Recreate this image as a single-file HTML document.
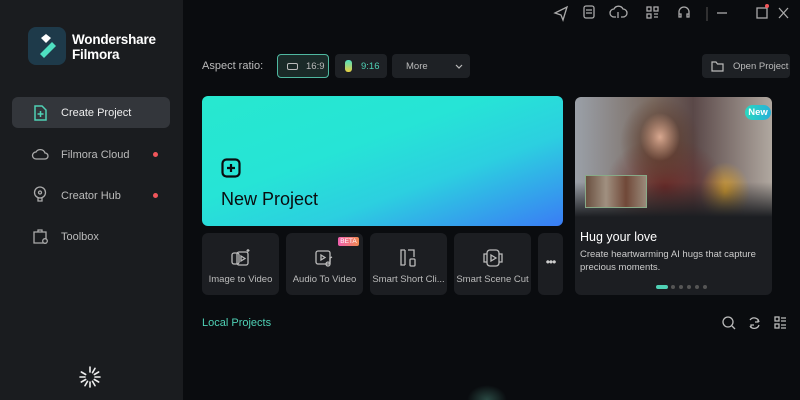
<!DOCTYPE html>
<html style="overflow:hidden;width:800px;height:400px"><head><meta charset="utf-8"><style>
*{margin:0;padding:0;box-sizing:border-box}
body{width:800px;height:400px;overflow:hidden;background:#0a0c0f;font-family:"Liberation Sans",sans-serif;position:relative;color:#ddd}
.a{position:absolute;white-space:nowrap}
.side{left:0;top:0;width:183px;height:400px;background:#1a1c1f}
.nav{left:12px;width:158px;height:31px;border-radius:6px;font-size:11px;color:#bbb;display:flex;align-items:center;padding-left:49px}
.dot{width:5px;height:5px;border-radius:50%;background:#f0555a}
.btn{top:54px;height:24px;border-radius:4px;background:#1e2125;font-size:9.5px;color:#bbb;display:flex;align-items:center}
.tool{top:233px;height:62px;width:77px;background:#1c1e22;border-radius:6px;font-size:9.5px;color:#bbb;text-align:center}
.tool svg{position:absolute;left:29px;top:16px}
.tool span{position:absolute;left:0;right:0;top:41px;white-space:nowrap;overflow:hidden}
svg{overflow:visible}
</style></head><body>
<div class="a side"></div>
<div class="a" style="left:28px;top:27px;width:38px;height:38px;border-radius:8px;background:#1e3a4a"></div>
<svg class="a" style="left:28px;top:27px" width="38" height="38"><path d="M13 11l5-4 5 4-5 5z" fill="#fff"/><path d="M12 27l12-12 4 4-12 12z" fill="#4fe0c2"/></svg>
<div class="a" style="left:72px;top:32px;font-size:13.5px;font-weight:bold;color:#fff;line-height:15px;letter-spacing:-0.2px">Wondershare<br>Filmora</div>
<div class="a nav" style="top:97px;background:#33363b;color:#eee">Create Project</div>
<svg class="a" style="left:33px;top:105px" width="14" height="16" fill="none" stroke="#4fd1b5" stroke-width="1.5"><path d="M2 1h7l4 4v10H2z"/><path d="M7.5 6v6M4.5 9h6"/></svg>
<div class="a nav" style="top:139px">Filmora Cloud</div><div class="a dot" style="left:153px;top:152px"></div>
<svg class="a" style="left:32px;top:147px" width="16" height="14" fill="none" stroke="#aaa" stroke-width="1.3"><path d="M4 12h9a3 3 0 0 0 0-6 5 5 0 0 0-9-1 3.5 3.5 0 0 0 0 7z"/></svg>
<div class="a nav" style="top:180px">Creator Hub</div><div class="a dot" style="left:153px;top:193px"></div>
<svg class="a" style="left:33px;top:186px" width="14" height="17" fill="none" stroke="#aaa" stroke-width="1.3"><circle cx="7" cy="6.5" r="5.5"/><path d="M5 12v3h4v-3"/><circle cx="7" cy="6.5" r="1.5"/></svg>
<div class="a nav" style="top:221px">Toolbox</div>
<svg class="a" style="left:33px;top:228px" width="15" height="16" fill="none" stroke="#aaa" stroke-width="1.3"><path d="M5 4V2h4v2M1 4h12v11H1z"/><circle cx="12" cy="13" r="2.3" fill="#1a1c1f"/></svg>
<svg class="a" style="left:78px;top:365px" width="24" height="24" stroke="#eee" stroke-width="1.6" stroke-linecap="round"><g transform="translate(12 12)"><path d="M0-5v-5"/><path d="M0-5v-5" transform="rotate(30)"/><path d="M0-5v-5" transform="rotate(60)"/><path d="M0-5v-5" transform="rotate(90)"/><path d="M0-5v-5" transform="rotate(120)"/><path d="M0-5v-5" transform="rotate(150)"/><path d="M0-5v-5" transform="rotate(180)"/><path d="M0-5v-5" transform="rotate(210)"/><path d="M0-5v-5" transform="rotate(240)"/><path d="M0-5v-5" transform="rotate(270)"/><path d="M0-5v-5" transform="rotate(300)"/></g></svg>
<svg class="a" style="left:552px;top:4px" width="245" height="18" fill="none" stroke="#aaa" stroke-width="1.3"><path d="M3 9l12-6-4 13-2-5z"/><rect x="32" y="2" width="10" height="12" rx="2"/><path d="M34 6h6M34 9h6"/><path d="M64 13h-2a4 4 0 0 1 0-8 5 5 0 0 1 9 0 4 4 0 0 1 0 8h-2M66 8v6"/><rect x="95" y="3" width="4" height="4"/><rect x="102" y="3" width="4" height="4"/><rect x="95" y="10" width="4" height="4"/><path d="M102 10h4M102 13h4"/><path d="M127 11V8a5 5 0 0 1 10 0v3M127 10h2v3h-2zM137 10h-2v3h2z"/><path d="M155 3v14" stroke="#444"/><path d="M165 9h10"/><rect x="205" y="4" width="10" height="10"/><path d="M227 4l9 10M236 4l-9 10"/></svg>
<div class="a dot" style="left:765px;top:4px;width:4px;height:4px"></div>
<div class="a" style="left:202px;top:60px;font-size:11px;color:#bbb">Aspect ratio:</div>
<div class="a btn" style="left:277px;width:52px;border:1px solid #4fb8a0;background:#1a2a28;padding-left:9px"><span style="display:inline-block;width:11px;height:7px;border:1.3px solid #bbb;border-radius:2px;margin-right:8px"></span>16:9</div>
<div class="a btn" style="left:335px;width:52px;padding-left:10px"><span style="display:inline-block;width:7px;height:12px;border-radius:3px;background:linear-gradient(#4fe0c2,#e8d040);margin-right:9px"></span><span style="color:#4fd1b5">9:16</span></div>
<div class="a btn" style="left:392px;width:78px;padding-left:14px">More<svg style="margin-left:27px" width="8" height="5" fill="none" stroke="#bbb" stroke-width="1.2"><path d="M1 1l3 3 3-3"/></svg></div>
<div class="a btn" style="left:702px;width:88px;padding-left:9px"><svg width="13" height="11" fill="none" stroke="#bbb" stroke-width="1.2" style="margin-right:9px"><path d="M1 1h4l1.5 2H12v7H1z"/></svg>Open Project</div>
<div class="a" style="left:202px;top:96px;width:361px;height:130px;border-radius:6px;background:linear-gradient(160deg,#27e8cf 0%,#26e4d6 40%,#2ccfe0 65%,#3a7cf5 100%)"></div>
<svg class="a" style="left:221px;top:158px" width="20" height="20" fill="none" stroke="#0a0c0f" stroke-width="2.2"><rect x="1.5" y="1.5" width="17" height="17" rx="4"/><path d="M10 6v8M6 10h8"/></svg>
<div class="a" style="left:221px;top:189px;font-size:18px;color:#0a0c0f">New Project</div>
<div class="a tool" style="left:202px"><svg width="20" height="18" fill="none" stroke="#bbb" stroke-width="1.3"><rect x="1" y="4" width="7" height="11" rx="2"/><rect x="6" y="3" width="11" height="13" rx="2"/><path d="M10 7l4 2.5-4 2.5z"/><path d="M17 0v3M15.5 1.5h3"/></svg><span>Image to Video</span></div>
<div class="a tool" style="left:286px"><svg width="20" height="18" fill="none" stroke="#bbb" stroke-width="1.3"><rect x="1" y="2" width="14" height="13" rx="2"/><path d="M6 6l4 2.5-4 2.5z"/><circle cx="13" cy="15" r="2"/><path d="M15 15V9l2-1"/></svg><span>Audio To Video</span></div>
<div class="a" style="left:338px;top:237px;width:21px;height:9px;border-radius:2px;background:linear-gradient(90deg,#f060b0,#f08a50);font-size:6.5px;color:#fff;text-align:center;line-height:9px">BETA</div>
<div class="a tool" style="left:370px"><svg width="20" height="18" fill="none" stroke="#bbb" stroke-width="1.3"><path d="M6 1H2v15h4M9 1h6v7"/><path d="M6 1v15"/><rect x="11" y="10" width="5" height="7" rx="1"/></svg><span>Smart Short Cli...</span></div>
<div class="a tool" style="left:454px"><svg width="20" height="18" fill="none" stroke="#bbb" stroke-width="1.3"><rect x="4" y="1" width="12" height="16" rx="3"/><path d="M4 5H1v8h3M16 5h3v8h-3"/><path d="M8 6l5 3-5 3z"/></svg><span>Smart Scene Cut</span></div>
<div class="a tool" style="left:538px;width:25px"><span style="top:22px;font-size:12px;letter-spacing:-1px;color:#ccc">•••</span></div>
<div class="a" style="left:575px;top:97px;width:197px;height:198px;border-radius:6px;background:#1c1e22;overflow:hidden">
<div class="a" style="left:0;top:0;width:197px;height:120px;background:radial-gradient(ellipse 20px 24px at 85px 40px,#d8a890,transparent),radial-gradient(ellipse 40px 45px at 85px 45px,#5a3828,transparent),radial-gradient(ellipse 60px 50px at 90px 90px,#6a2a28,transparent),radial-gradient(ellipse 25px 30px at 150px 95px,#d8a030,transparent),linear-gradient(90deg,#9aa0a8,#7a6a60 40%,#5a4848 60%,#b0a8a0)"></div>
<div class="a" style="left:0;top:85px;width:197px;height:35px;background:linear-gradient(transparent,#1c1e22)"></div>
<div class="a" style="left:10px;top:78px;width:62px;height:33px;border:1px solid #8a8;background:linear-gradient(90deg,#6a5040,#a09080,#704838,#9a8a7a)"></div>
<div class="a" style="left:170px;top:8px;width:26px;height:15px;border-radius:8px;background:linear-gradient(90deg,#2ad8c0,#27b0d8);font-size:9.5px;font-weight:bold;color:#fff;line-height:15px;text-align:center">New</div>
<div class="a" style="left:5px;top:133px;font-size:12.5px;color:#fff">Hug your love</div>
<div class="a" style="left:5px;top:151px;font-size:9.5px;color:#ccc;line-height:13px;width:190px;white-space:normal">Create heartwarming AI hugs that capture precious moments.</div>
<div class="a" style="left:81px;top:188px;width:12px;height:4px;border-radius:2px;background:#4fd1b5"></div>
<div class="a" style="left:96px;top:188px;width:4px;height:4px;border-radius:50%;background:#555;box-shadow:8px 0 #555,16px 0 #555,24px 0 #555,32px 0 #555"></div>
</div>
<div class="a" style="left:202px;top:317px;font-size:11px;color:#4fd1b5">Local Projects</div>
<svg class="a" style="left:722px;top:316px" width="66" height="14" fill="none" stroke="#bbb" stroke-width="1.3"><circle cx="6" cy="6" r="5"/><path d="M10 10l3 3"/><path d="M28 4a5 5 0 0 1 9 2M37 9a5 5 0 0 1-9 1M36 3v3h-3M29 12v-3h3"/><rect x="53" y="1" width="4" height="4"/><rect x="53" y="8" width="4" height="4"/><path d="M59 2h5M59 5h5M59 9h5M59 12h5"/></svg>
<div class="a" style="left:467px;top:385px;width:40px;height:15px;background:radial-gradient(ellipse at 50% 100%,#2a4a44,transparent 70%)"></div>
</body></html>
